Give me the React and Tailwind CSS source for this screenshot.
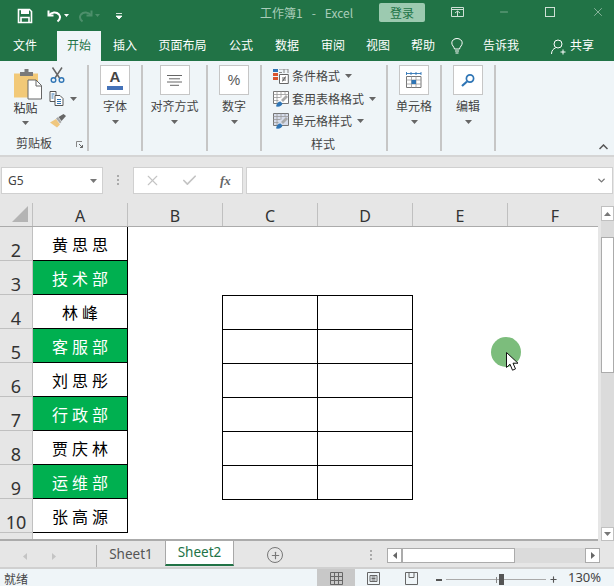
import React from 'react';
import { Check, Plus, X, Minus, ChevronDown } from 'lucide-react';

const Arrow = ({ className = '' }) => (
  <svg width="7" height="4" viewBox="0 0 7 4" className={className}><path d="M0 0h7L3.5 4z" fill="#666" /></svg>
);

const SaveIcon = () => (
  <svg width="16" height="16" viewBox="0 0 16 16" fill="none">
    <path d="M1.5 1.5h11l2 2v11h-13z" stroke="#fff" strokeWidth="1.6" />
    <path d="M4 1.5h8v4.5H4z" fill="#fff" />
    <path d="M4 14.5V9.5h8v5" stroke="#fff" strokeWidth="1.6" />
  </svg>
);

const UndoIcon = ({ color, flip }) => (
  <svg width="15" height="14" viewBox="0 0 15 14" fill="none" className={flip ? '-scale-x-100' : ''}>
    <path d="M1.5 1.5v5h5" stroke={color} strokeWidth="2" />
    <path d="M2 6.2C4.5 3 9.5 2.5 12 5.5c1.6 2.2 1 5-1.5 7" stroke={color} strokeWidth="2" />
  </svg>
);

const PasteIcon = () => (
  <svg width="29" height="31" viewBox="0 0 29 31">
    <path d="M0 4.500h24v24H0z" fill="#f2c978" />
    <path d="M6 3h4.500V0h4v3H19v4H6z" fill="#7a7a7a" />
    <path d="M14 11h8l5.500 5.500V30H14z" fill="#fff" stroke="#666" />
    <path d="M22 11v6h5.500" fill="none" stroke="#666" />
  </svg>
);

const CutIcon = () => (
  <svg width="15" height="16" viewBox="0 0 15 16" fill="none">
    <path d="M2.500 0.500l7 10.500M12 0.500L5 11" stroke="#666" strokeWidth="1.500" />
    <circle cx="3.500" cy="13" r="2.300" stroke="#2f75b5" strokeWidth="1.400" />
    <circle cx="11.500" cy="13" r="2.300" stroke="#2f75b5" strokeWidth="1.400" />
  </svg>
);

const CopyIcon = () => (
  <svg width="15" height="15" viewBox="0 0 15 15" fill="none">
    <path d="M1 .5h6v10H1z" fill="#fff" stroke="#555" />
    <path d="M6 4.500h5l3 3v7H6z" fill="#fff" stroke="#555" />
    <path d="M8 8.500h4M8 10.500h4M8 12.500h4" stroke="#2f75b5" />
    <path d="M2.500 3h3M2.500 5h2M2.500 7h2" stroke="#2f75b5" />
  </svg>
);

const BrushIcon = () => (
  <svg width="16" height="14" viewBox="0 0 16 14">
    <path d="M0 8.500l6-3.500 4 5.500-3 3z" fill="#efc77f" />
    <path d="M6 4.500l2-1.500 3.500 5-1.500 1.500z" fill="#a8a8a8" />
    <path d="M8.500 3l5-3L16 2l-4.500 5z" fill="#666" />
  </svg>
);

const CondIcon = () => (
  <svg width="16" height="15" viewBox="0 0 16 15" fill="none">
    <path d="M0 0h5v3H0z" fill="#2f75b5" /><path d="M0 4h5v3H0zM0 8h5v3H0z" fill="#d9532c" />
    <path d="M6 0h9M6 3.500h3M11 0v4M15 0v4" stroke="#888" />
    <path d="M6.500 5.500h8.800v9H6.500z" fill="#fff" stroke="#666" />
    <path d="M9 9h4M9 11h4M12.500 7.500l-3 5" stroke="#444" strokeWidth=".8" />
  </svg>
);

const TableStyleIcon = ({ fill }) => (
  <svg width="16" height="16" viewBox="0 0 16 16" fill="none">
    <path d="M.5 .5h15v12H.5z" fill={fill} stroke="#777" />
    <path d="M.5 3.500h15M.5 6.500h7M.5 9.500h5M4 .5v12M8 .5v6M12 .5v3" stroke="#999" strokeWidth=".8" />
    <path d="M8 9l5-5 2 2-5 5z" fill="#a9a9a9" />
    <path d="M3 15.500c.5-3 2-5 4.500-5l2 2c-.5 2.500-3 3.500-6.500 3z" fill="#2f75b5" />
  </svg>
);

const AlignIcon = () => (
  <svg width="15" height="11" viewBox="0 0 15 11"><path d="M0 .5h15M2 3.800h11M0 7h15M3 10.300h9" stroke="#666" /></svg>
);

const CellsIcon = () => (
  <svg width="16" height="17" viewBox="0 0 16 17" fill="none">
    <path d="M.5 4.500h14.500v11H.5z" fill="#fff" stroke="#777" />
    <path d="M.5 8h14.500M.5 12h14.500M5.500 4.500v11M10 4.500v11" stroke="#999" strokeWidth=".8" />
    <path d="M5.500 8H10v4H5.500z" fill="#2f75b5" />
    <path d="M.5 0v3M15 0v3M5 0v3M10 0v3M.5 1.500h14.500" stroke="#2f75b5" strokeWidth=".9" />
  </svg>
);

const SearchIcon = () => (
  <svg width="14" height="13" viewBox="0 0 14 13" fill="none">
    <circle cx="9" cy="4.500" r="3.600" stroke="#2f75b5" strokeWidth="1.700" />
    <path d="M6 7.500L1 12" stroke="#2f75b5" strokeWidth="2.200" />
  </svg>
);

const BoxButton = ({ label, children, width }) => (
  <div className={`flex flex-col items-center border-r-2 border-[#c6c6c6] h-[86px] mt-[4px] ${width}`}>
    <div className="w-[30px] h-[30px] bg-white border border-[#c6c6c6] flex items-center justify-center shrink-0">{children}</div>
    <div className="text-[12px] leading-[16px] mt-[3px] text-[#444]">{label}</div>
    <Arrow className="mt-[6px]" />
  </div>
);

const StyleRow = ({ icon, label }) => (
  <div className="flex items-center h-[22.500px] gap-[2px]">
    {icon}
    <span className="text-[12px] text-[#444] ml-[1px]">{label}</span>
    <Arrow className="ml-[3px]" />
  </div>
);

const Ribbon = () => (
  <div className="flex h-[94px] bg-[#eff5f8] border-b-2 border-[#d5d5d5] box-content relative">
    <div className="w-[89px] h-[86px] mt-[4px] border-r-2 border-[#c6c6c6] flex flex-col">
      <div className="flex h-[68px]">
        <div className="w-[50px] flex flex-col items-center pl-[3px]">
          <div className="mt-[4px] ml-[4px]"><PasteIcon /></div>
          <div className="text-[12px] leading-[16px] text-[#333] -ml-[2px]">粘贴</div>
          <Arrow className="mt-[5px] -ml-[2px]" />
        </div>
        <div className="flex flex-col pt-[2px]">
          <CutIcon />
          <div className="flex items-center mt-[8px] gap-[6px] -ml-[1px]"><CopyIcon /><Arrow /></div>
          <div className="mt-[8px]"><BrushIcon /></div>
        </div>
      </div>
      <div className="relative text-[12px] leading-[16px] pl-[16px] mt-[3px] text-[#444]">
        剪贴板
        <svg width="7" height="7" viewBox="0 0 7 7" className="absolute right-[4px] top-[6px]" fill="none">
          <path d="M.5 6V.5H6" stroke="#888" /><path d="M3 3l3.500 3.500M6.500 4v2.500H4" stroke="#666" />
        </svg>
      </div>
    </div>
    <BoxButton label="字体" width="w-[54px]">
      <div className="flex flex-col items-center -mt-[1px]">
        <span className="font-['Liberation_Sans',sans-serif] font-bold text-[15px] leading-[14px] text-[#444]">A</span>
        <div className="w-[16px] h-[4px] bg-[#4472b8] mt-[2px]" />
      </div>
    </BoxButton>
    <BoxButton label="对齐方式" width="w-[65px]"><AlignIcon /></BoxButton>
    <BoxButton label="数字" width="w-[54px]">
      <span className="font-['Liberation_Sans',sans-serif] text-[14px] text-[#555]">%</span>
    </BoxButton>
    <div className="w-[126px] h-[86px] mt-[4px] border-r-2 border-[#c6c6c6] flex flex-col pl-[11px]">
      <div className="h-[68px]">
        <StyleRow icon={<CondIcon />} label="条件格式" />
        <StyleRow icon={<TableStyleIcon fill="#fff" />} label="套用表格格式" />
        <StyleRow icon={<TableStyleIcon fill="#d6dcea" />} label="单元格样式" />
      </div>
      <div className="text-[12px] leading-[16px] text-[#444] text-center pr-[13px] mt-[3px]">样式</div>
    </div>
    <BoxButton label="单元格" width="w-[54px]"><CellsIcon /></BoxButton>
    <BoxButton label="编辑" width="w-[54px]"><SearchIcon /></BoxButton>
    <svg width="9" height="6" viewBox="0 0 9 6" fill="none" className="absolute right-[6px] bottom-[5px]">
      <path d="M.5 5L4.500 1l4 4" stroke="#555" strokeWidth="1.500" />
    </svg>
  </div>
);

const tabs = [
  { t: '文件', w: 'w-[57px] pr-[7px]' },
  { t: '开始', w: 'w-[44px]', active: true },
  { t: '插入', w: 'w-[48px]' },
  { t: '页面布局', w: 'w-[67px]' },
  { t: '公式', w: 'w-[50px]' },
  { t: '数据', w: 'w-[42px]' },
  { t: '审阅', w: 'w-[50px]' },
  { t: '视图', w: 'w-[40px]' },
  { t: '帮助', w: 'w-[50px]' },
];

const Top = () => (
  <div className="bg-[#217346]">
    <div className="h-[31px] flex items-center relative">
      <div className="ml-[17px]"><SaveIcon /></div>
      <div className="ml-[14px]"><UndoIcon color="#fff" /></div>
      <svg width="5" height="3" viewBox="0 0 5 3" className="ml-[2px]"><path d="M0 0h5L2.500 3z" fill="#fff" /></svg>
      <div className="ml-[9px]"><UndoIcon color="#4d8f6b" flip /></div>
      <svg width="5" height="3" viewBox="0 0 5 3" className="ml-[2px]"><path d="M0 0h5L2.500 3z" fill="#4d8f6b" /></svg>
      <svg width="6" height="6" viewBox="0 0 6 6" className="ml-[16px]"><path d="M0 .5h6M0 3h6L3 6z" stroke="#fff" strokeWidth=".8" fill="#fff" /></svg>
      <div className="text-[12px] text-[#a9cdb9] absolute left-[260px] top-[4px] flex gap-[9px]">
        <span>工作簿1</span><span>-</span><span>Excel</span>
      </div>
      <div className="absolute left-[379px] top-[3px] w-[46px] h-[19px] rounded-[2px] bg-[#9ccab0] text-[#217346] text-[12px] leading-[19px] text-center">登录</div>
      <svg width="13" height="10" viewBox="0 0 13 10" fill="none" className="absolute left-[451px] top-[7px]">
        <path d="M.5 .5h12v9H.5zM.5 2.500h12M4 6l2.500-2L9 6M6.500 4v5" stroke="#cfe0d6" />
      </svg>
      <Minus size={12} strokeWidth={1} color="#cfe0d6" className="absolute left-[498px] top-[6px]" />
      <div className="absolute left-[545px] top-[7px] w-[10px] h-[10px] border border-[#cfe0d6]" />
      <X size={14} strokeWidth={1} color="#cfe0d6" className="absolute left-[591px] top-[5px]" />
    </div>
    <div className="h-[30px] flex items-end text-[12px] text-white relative">
      {tabs.map((t) => (
        <div
          key={t.t}
          className={`${t.w} h-[30px] leading-[28px] text-center ${t.active ? 'bg-[#eff5f8] text-[#217346]' : ''}`}
        >
          {t.t}
        </div>
      ))}
      <svg width="12" height="16" viewBox="0 0 12 16" fill="none" className="ml-[3px] mb-[7px]">
        <path d="M3.500 11C3 8.500 .8 7.500 .8 4.900a5.200 4.400 0 0 1 10.400 0C11.200 7.500 9 8.500 8.500 11zM4 13h4M4.500 15h3" stroke="#fff" />
      </svg>
      <div className="ml-[20px] leading-[28px] h-[30px]">告诉我</div>
      <svg width="15" height="16" viewBox="0 0 15 16" fill="none" className="ml-[32px] mb-[6px]">
        <circle cx="7" cy="5" r="4" stroke="#fff" /><path d="M.5 15c0-3.500 2-5.500 4-6M9.500 13h5M12 10.500v5" stroke="#fff" />
      </svg>
      <div className="ml-[4px] leading-[28px] h-[30px]">共享</div>
    </div>
  </div>
);

const FormulaBar = () => (
  <div className="h-[46px] bg-[#e6e6e6] flex items-start pt-[10px] pl-[1px]">
    <div className="w-[102px] h-[27px] bg-white border border-[#d0d0d0] flex items-center pl-[6px] pr-[5px] justify-between">
      <span className="text-[12px] font-['Noto_Sans',sans-serif] text-[#444]">G5</span>
      <svg width="7" height="4" viewBox="0 0 7 4"><path d="M0 0h7L3.500 4z" fill="#777" /></svg>
    </div>
    <div className="w-[30px] flex flex-col items-center gap-[2px] pt-[8px]">
      <i className="w-[2px] h-[2px] bg-[#aaa]" /><i className="w-[2px] h-[2px] bg-[#aaa]" /><i className="w-[2px] h-[2px] bg-[#aaa]" />
    </div>
    <div className="w-[110px] h-[27px] bg-white border border-[#d0d0d0] flex items-center pl-[10px] gap-[20px]">
      <X size={17} strokeWidth={1.600} color="#c4c4c4" />
      <Check size={17} strokeWidth={2.400} color="#c4c4c4" />
      <span className="font-['Liberation_Serif',serif] italic font-bold text-[13px] text-[#666] ml-[2px]">fx</span>
    </div>
    <div className="w-[367px] ml-[3px] h-[27px] bg-white border border-[#d0d0d0] flex items-center justify-end pr-[5px]">
      <ChevronDown size={11} strokeWidth={3} color="#777" />
    </div>
  </div>
);

const names = [
  { n: 2, t: '黄思思' }, { n: 3, t: '技术部', g: true }, { n: 4, t: '林峰' }, { n: 5, t: '客服部', g: true },
  { n: 6, t: '刘思彤' }, { n: 7, t: '行政部', g: true }, { n: 8, t: '贾庆林' }, { n: 9, t: '运维部', g: true }, { n: 10, t: '张高源' },
];

const Sheet = () => (
  <div className="h-[338px] bg-[#e6e6e6] flex relative overflow-hidden">
    <div className="w-[601px] shrink-0">
      <div className="grid grid-cols-[33px_95px_95px_95px_95px_95px_90px] w-[598px] h-[24px] text-[16px] leading-[16px] font-['Noto_Sans',sans-serif] text-[#333] border-b border-[#ababab]">
        <div className="flex items-end justify-end pr-[4px] pb-[4px] border-r border-[#c0c0c0]">
          <svg width="16" height="16" viewBox="0 0 16 16"><path d="M16 0v16H0z" fill="#b4b4b4" /></svg>
        </div>
        {['A', 'B', 'C', 'D', 'E'].map((c) => (
          <div key={c} className="flex items-end justify-center pb-[2px] border-r border-[#c0c0c0]">{c}</div>
        ))}
        <div className="flex items-end justify-center pb-[2px] pl-[4px]">F</div>
      </div>
      <div className="grid grid-cols-[33px_95px_190px_280px] border-r-2 border-[#ababab] w-[598px]">
        {names.map((r) => (
          <React.Fragment key={r.n}>
            <div className="h-[34px] bg-[#e6e6e6] border-r border-b border-[#c0c0c0] text-[18px] leading-[18px] flex items-end justify-center pb-[1px] font-['Noto_Sans',sans-serif] text-[#333]">{r.n}</div>
            <div className={`h-[34px] border-r border-b border-black text-[16px] leading-[34px] text-center pl-[4px] tracking-[4px] font-['Noto_Sans_CJK_SC',sans-serif] ${r.g ? 'bg-[#00b050] text-white' : 'bg-white text-black'}`}>
              {r.t}
            </div>
            <div className="h-[34px] bg-white" />
            <div className="h-[34px] bg-white" />
          </React.Fragment>
        ))}
        <div className="h-[6px] border-r border-[#c0c0c0] bg-[#e6e6e6]" />
        <div className="col-span-3 h-[6px] bg-white" />
      </div>
      <div className="border-t-2 border-[#ababab] w-[598px]" />
    </div>

    {/* C:D table drawn on the sheet */}
    <div className="absolute left-[222px] top-[92px] grid grid-cols-[95px_95px] border-l border-t border-black">
      {Array.from({ length: 12 }).map((_, i) => (
        <div key={i} className="h-[34px] border-r border-b border-black bg-white" />
      ))}
    </div>

    {/* vertical scrollbar */}
    <div className="w-[13px] flex flex-col pt-[3px]">
      <div className="h-[15px] bg-white border border-[#c0c0c0] flex items-center justify-center shrink-0">
        <svg width="7" height="4" viewBox="0 0 7 4"><path d="M0 4h7L3.500 0z" fill="#777" /></svg>
      </div>
      <div className="h-[16px] bg-[#dbdbdb] shrink-0" />
      <div className="h-[136px] bg-white border border-[#ababab] shrink-0" />
      <div className="flex-1 bg-[#dbdbdb]" />
      <div className="h-[14px] bg-white border border-[#c0c0c0] flex items-center justify-center shrink-0">
        <svg width="7" height="4" viewBox="0 0 7 4"><path d="M0 0h7L3.500 4z" fill="#777" /></svg>
      </div>
    </div>

    {/* pointer highlight */}
    <div className="absolute left-[491px] top-[134px] w-[30px] h-[30px] rounded-full bg-[#7cbd7c]" />
    <svg width="13" height="20" viewBox="0 0 13 20" className="absolute left-[506px] top-[149px]">
      <path d="M.5 .5v15l3.500-3.300 2.500 6 3-1.300-2.500-5.700h5z" fill="#fff" stroke="#111" strokeWidth="1" />
    </svg>
  </div>
);

const Tabs = () => (
  <div className="h-[28px] bg-[#e6e6e6] border-b-2 border-[#d0d0d0] flex items-start text-[13.500px] font-['Noto_Sans',sans-serif] relative">
    <div className="w-[97px] h-[22px] mt-[4px] border-r border-[#b0b0b0] flex items-center pl-[23px] gap-[25px]">
      <svg width="4" height="7" viewBox="0 0 4 7"><path d="M4 0v7L0 3.500z" fill="#c4c4c4" /></svg>
      <svg width="4" height="7" viewBox="0 0 4 7"><path d="M0 0v7l4-3.500z" fill="#c4c4c4" /></svg>
    </div>
    <div className="w-[68px] text-center leading-[26px] text-[#555]">Sheet1</div>
    <div className="w-[69px] h-[25px] bg-white border-x border-[#a8a8a8] border-b-2 border-b-[#217346] text-center leading-[23px] text-[#217346]">Sheet2</div>
    <div className="ml-[33px] mt-[6px] w-[16px] h-[16px] rounded-full border border-[#777] flex items-center justify-center">
      <Plus size={11} strokeWidth={2.500} color="#777" />
    </div>
    <div className="absolute left-[370px] top-[9px] flex flex-col gap-[2px]">
      <i className="w-[2px] h-[2px] bg-[#aaa]" /><i className="w-[2px] h-[2px] bg-[#aaa]" /><i className="w-[2px] h-[2px] bg-[#aaa]" />
    </div>
    <div className="absolute left-[387px] top-[7px] w-[213px] h-[15px] flex bg-[#dbdbdb]">
      <div className="w-[15px] bg-white border border-[#ababab] flex items-center justify-center">
        <svg width="4" height="7" viewBox="0 0 4 7"><path d="M4 0v7L0 3.500z" fill="#666" /></svg>
      </div>
      <div className="w-[113px] bg-white border border-[#ababab]" />
      <div className="flex-1" />
      <div className="w-[15px] bg-white border border-[#ababab] flex items-center justify-center">
        <svg width="4" height="7" viewBox="0 0 4 7"><path d="M0 0v7l4-3.500z" fill="#666" /></svg>
      </div>
    </div>
  </div>
);

const StatusBar = () => (
  <div className="h-[17px] bg-[#eff5f8] flex items-center relative text-[12px] text-[#444] overflow-hidden">
    <span className="pl-[4px] leading-[17px] mt-[2px]">就绪</span>
    <div className="absolute left-[317px] top-0 w-[38px] h-[17px] bg-[#c8c8c8] flex justify-center pt-[3px]">
      <svg width="13" height="13" viewBox="0 0 13 13" fill="none" className="shrink-0"><path d="M.5 .5h12v12H.5zM4.500 .5v12M8.500 .5v12M.5 4.500h12M.5 8.500h12" stroke="#666" /></svg>
    </div>
    <svg width="13" height="13" viewBox="0 0 13 13" fill="none" className="absolute left-[367px] top-[3px]">
      <path d="M.5 .5h12v12H.5zM3 3.500h7v6H3zM4.500 5h4M4.500 6.500h4M4.500 8h4" stroke="#666" />
    </svg>
    <svg width="13" height="13" viewBox="0 0 13 13" fill="none" className="absolute left-[405px] top-[3px]">
      <path d="M.5 .5h12v12H.5zM4 .5v5h5v-5" stroke="#666" />
    </svg>
    <div className="absolute left-[436px] top-[10px] w-[6px] h-[2px] bg-[#555]" />
    <div className="absolute left-[446px] top-[10px] w-[100px] h-[1px] bg-[#aaa]" />
    <div className="absolute left-[499px] top-[5px] w-[5px] h-[11px] bg-[#555]" />
    <div className="absolute left-[496px] top-[8px] w-[1px] h-[6px] bg-[#888]" />
    <Plus size={9} strokeWidth={3} color="#555" className="absolute left-[549px] top-[6px]" />
    <span className="absolute left-[568px] top-0 leading-[17px] text-[13px] font-['Noto_Sans',sans-serif]">130%</span>
  </div>
);

export default function App() {
  return (
    <div className="w-[614px] h-[586px] overflow-hidden font-['Noto_Sans_CJK_SC','Noto_Sans',sans-serif] bg-[#e6e6e6]">
      <Top />
      <Ribbon />
      <FormulaBar />
      <Sheet />
      <Tabs />
      <StatusBar />
    </div>
  );
}
